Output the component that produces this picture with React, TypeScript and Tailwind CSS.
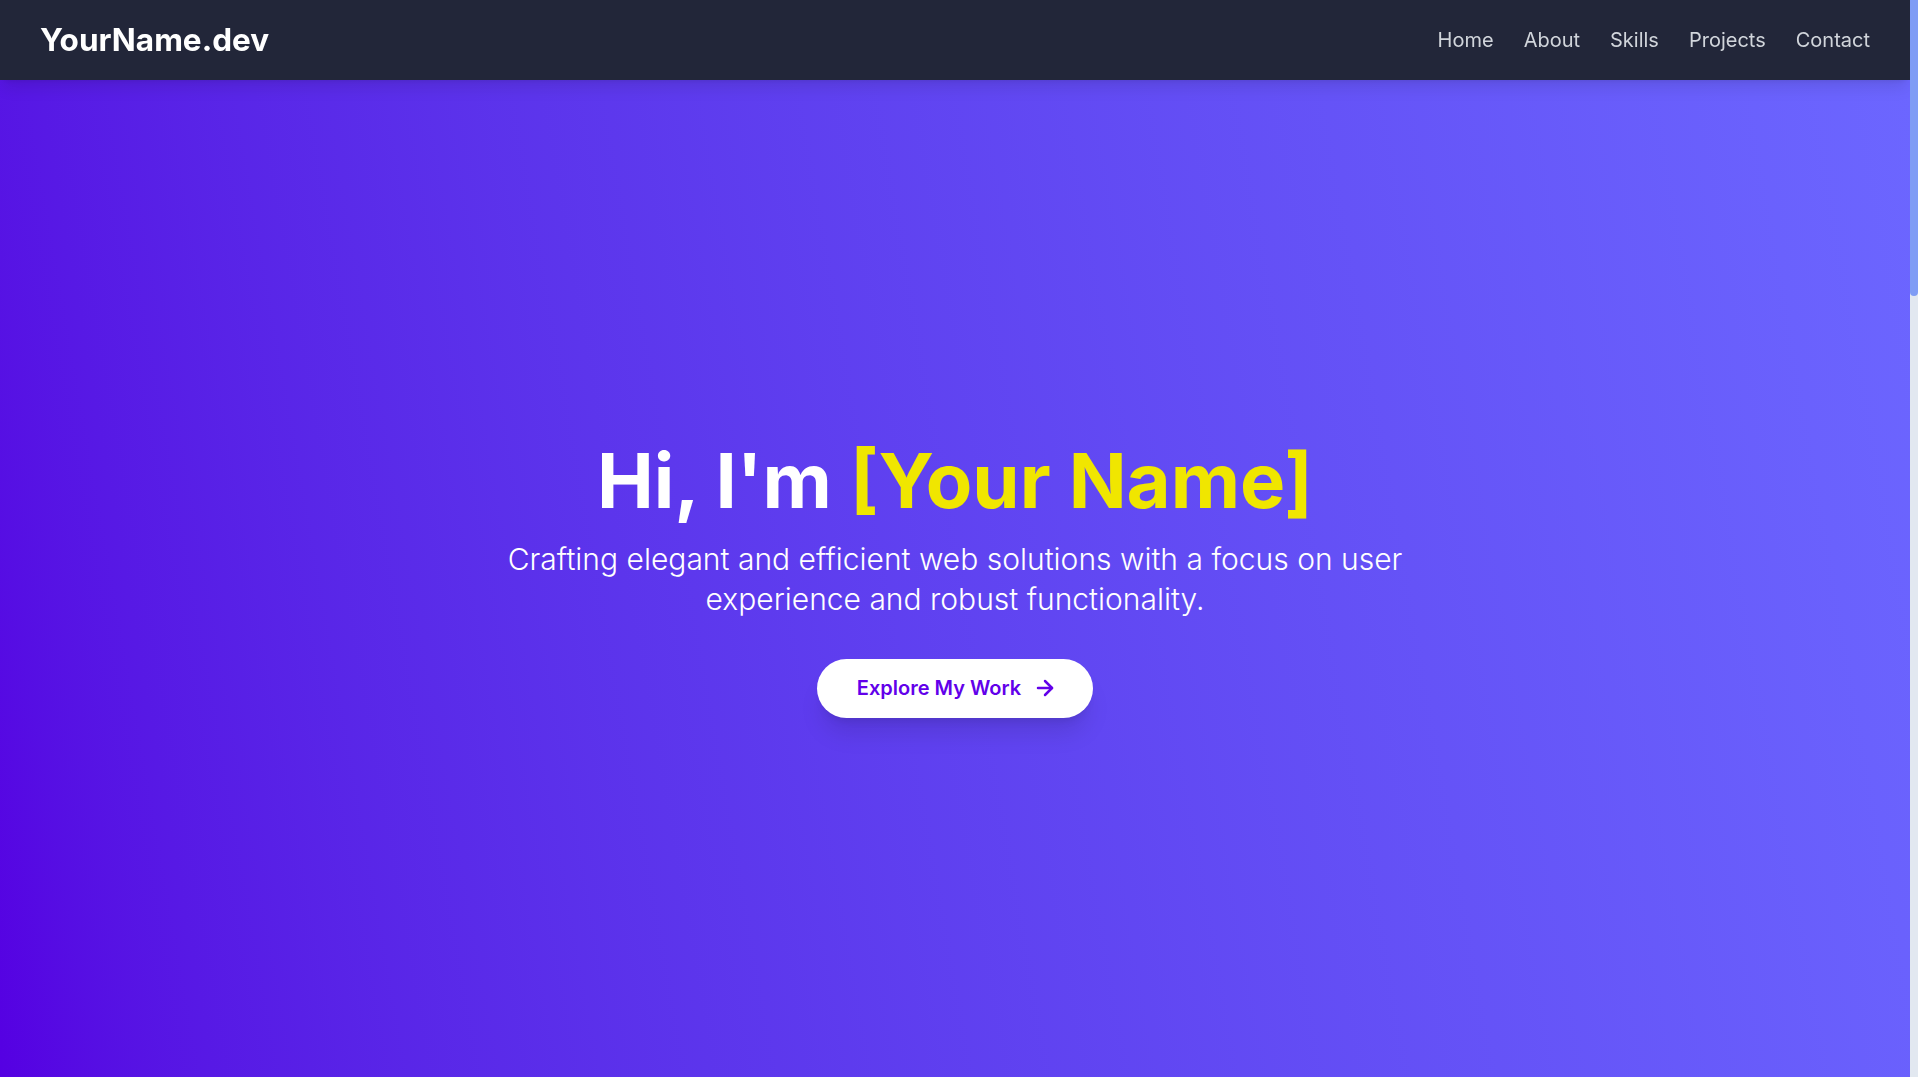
import React from "react";
import { ArrowRight } from "lucide-react";

const font = { fontFamily: "Inter, 'Noto Sans', sans-serif" };

function Section({ id, title, h }: { id: string; title: string; h: string }) {
  return (
    <section id={id} className={`${h} bg-white flex items-start justify-center pt-24`}>
      <h2 className="text-4xl font-bold text-[#222639]">{title}</h2>
    </section>
  );
}

export default function App() {
  return (
    <div style={font} className="flex h-screen w-full overflow-hidden">
      <div className="flex-1 h-full overflow-y-auto [scrollbar-width:none]">
        <nav className="sticky top-0 z-50 h-20 bg-[#222639] shadow-lg flex items-center justify-between px-10">
          <a href="#home" className="text-[31.5px] font-bold text-white">
            YourName.dev
          </a>
          <ul className="flex items-center gap-[30px] text-xl text-[#d1d5db]">
            <li><a href="#home">Home</a></li>
            <li><a href="#about">About</a></li>
            <li><a href="#skills">Skills</a></li>
            <li><a href="#projects">Projects</a></li>
            <li><a href="#contact">Contact</a></li>
          </ul>
        </nav>

        <section
          id="home"
          className="h-[calc(100vh-80px)] bg-linear-80 from-[#5500e2] to-[#6c66ff] flex flex-col items-center justify-center text-center px-6"
        >
          <h1 className="text-[76px] leading-[1.1] font-bold text-white">
            Hi, I'm <span className="text-[#f0e600]">[Your Name]</span>
          </h1>
          <p className="mt-4 max-w-4xl text-[30px] leading-[40px] font-light text-white">
            Crafting elegant and efficient web solutions with a focus on user experience and robust functionality.
          </p>
          <a
            href="#projects"
            className="mt-10 inline-flex items-center gap-3 rounded-full bg-white pl-10 pr-9 h-[59px] text-xl font-semibold text-[#6200ea] shadow-xl"
          >
            Explore My Work
            <ArrowRight size={24} strokeWidth={2.5} />
          </a>
        </section>

        <Section id="about" title="About Me" h="h-[700px]" />
        <Section id="skills" title="Skills" h="h-[700px]" />
        <Section id="projects" title="Projects" h="h-[800px]" />
        <Section id="contact" title="Contact" h="h-[640px]" />
      </div>
      <div className="w-2 h-full bg-[#e2e8f0] shrink-0">
        <div className="h-[296px] w-full bg-[#7f9cf5] rounded-b-full rounded-tl-sm" />
      </div>
    </div>
  );
}
